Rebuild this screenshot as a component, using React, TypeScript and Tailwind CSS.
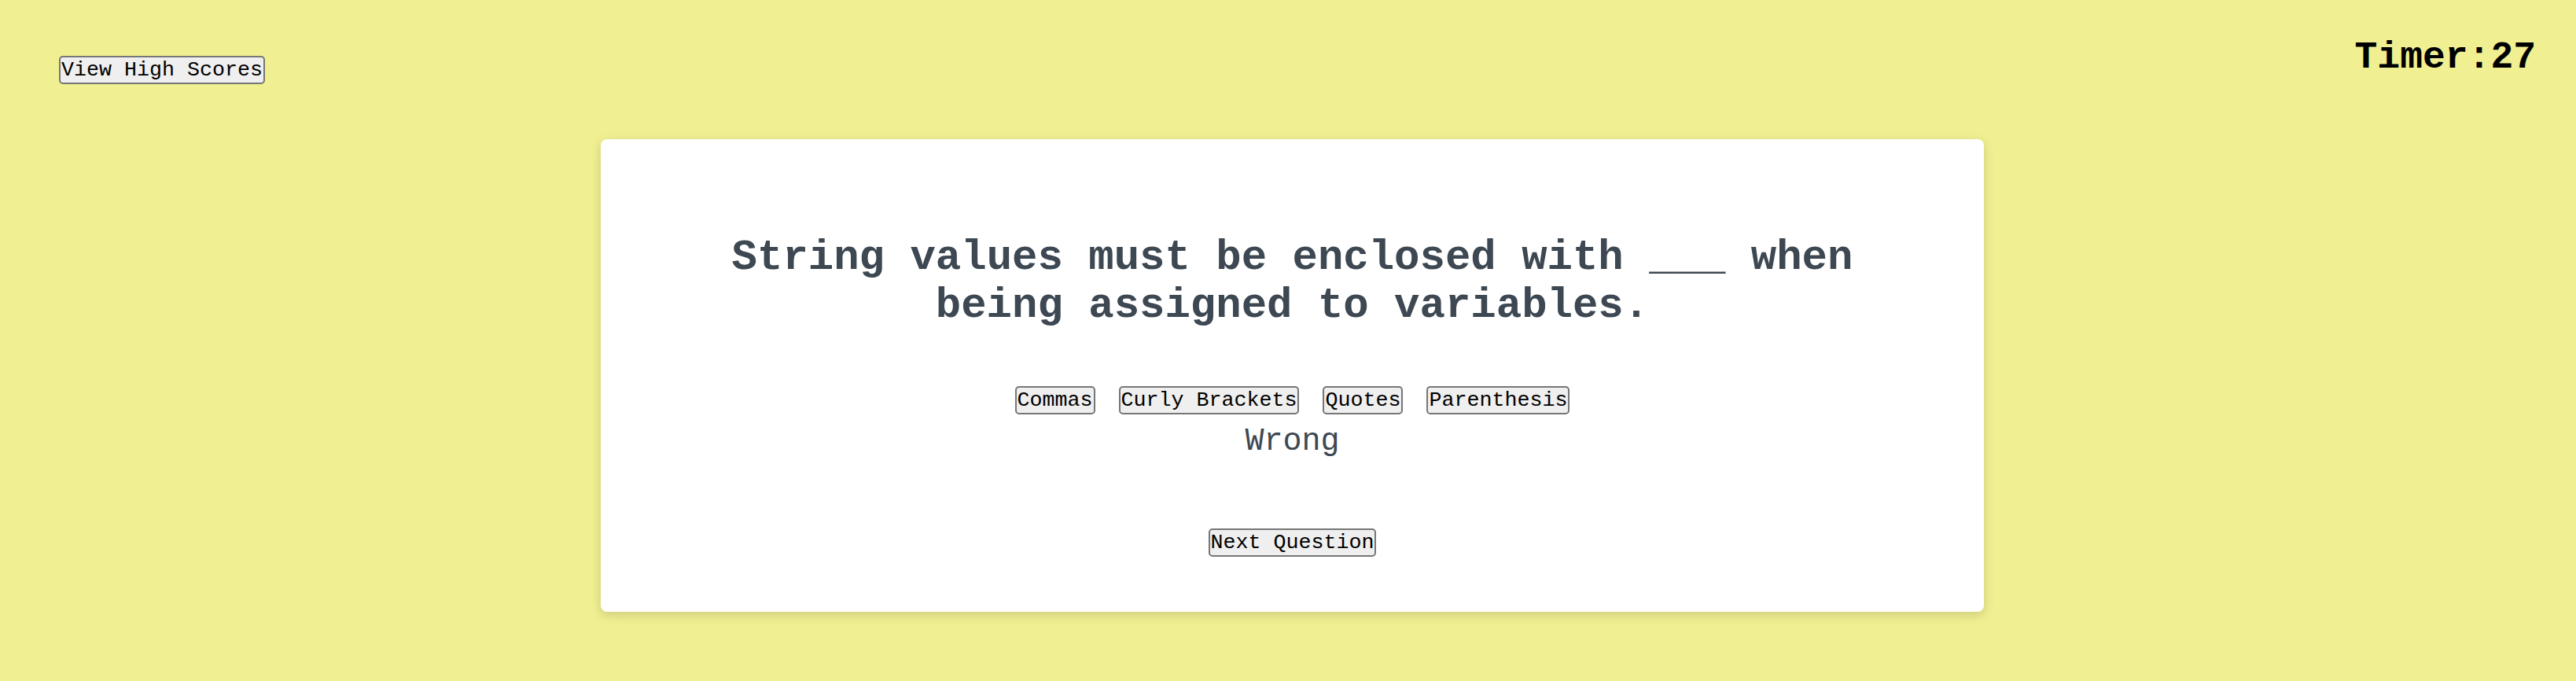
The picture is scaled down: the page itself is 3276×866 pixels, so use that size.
import React from "react"

const mono = "font-['Liberation_Mono','Courier_New',monospace]"

const answers = ["Commas", "Curly Brackets", "Quotes", "Parenthesis"]

function QuizButton({ children }: { children: React.ReactNode }) {
    return (
        <button
            className={`${mono} text-[26.67px] leading-[normal] text-black bg-[#efefef] border-2 border-[#767676] rounded-[5px] px-[1px] py-[1px] whitespace-pre`}
        >
            {children}
        </button>
    )
}

export default function App() {
    return (
        <div className={`${mono} min-h-screen w-full bg-[#f0ef91]`}>
            <header className="flex justify-between items-start pt-[46px] pl-[75px] pr-[51px]">
                <div className="mt-[25px]">
                    <QuizButton>View High Scores</QuizButton>
                </div>
                <div className="text-[48px] leading-[normal] font-bold text-black">Timer:27</div>
            </header>

            <main className="flex justify-center pl-[11px] mt-[70px]">
                <div className="w-[1759px] bg-white rounded-[8px] shadow-[0_4px_14px_rgba(0,0,0,0.15)] pt-[120px] pb-[70px] flex flex-col items-center">
                    <h2 className="max-w-[1500px] text-center text-[54px] leading-[normal] font-bold text-[#3d4852]">
                        String values must be enclosed with ___ when being assigned to variables.
                    </h2>

                    <div className="flex gap-[30px] mt-[72px]">
                        {answers.map((a) => (
                            <QuizButton key={a}>{a}</QuizButton>
                        ))}
                    </div>

                    <p className="mt-[12px] text-[40px] leading-[normal] text-[#3d4852]">Wrong</p>

                    <div className="mt-[88px]">
                        <QuizButton>Next Question</QuizButton>
                    </div>
                </div>
            </main>
        </div>
    )
}
